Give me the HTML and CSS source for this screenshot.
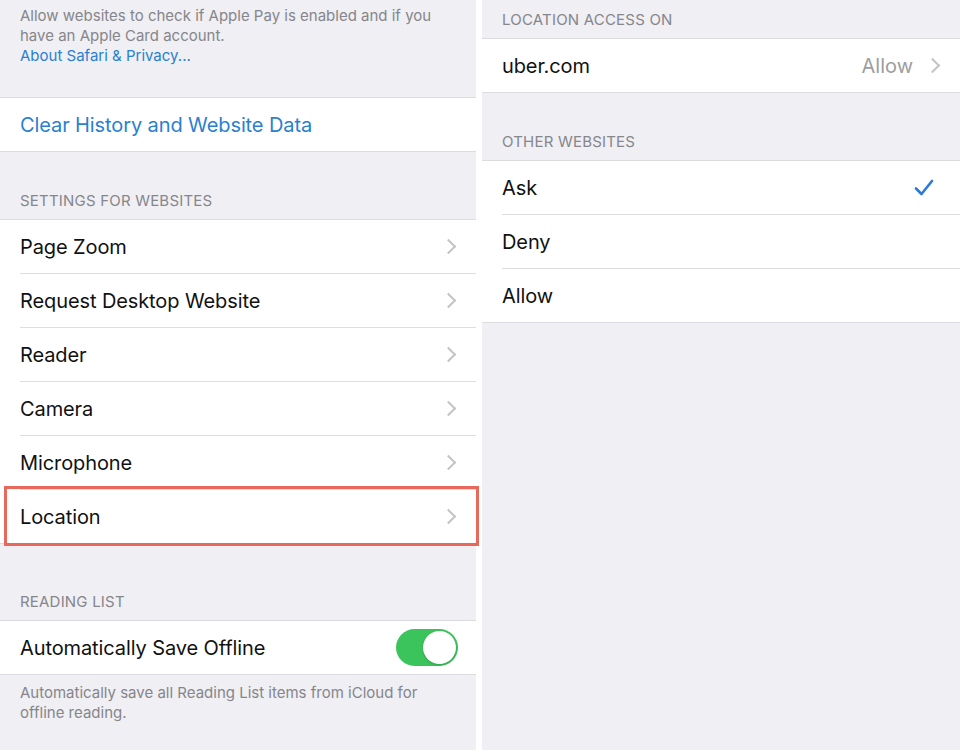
FILE: index.html
```html
<!DOCTYPE html>
<html lang="en">
<head>
    <meta charset="UTF-8">
    <title>Safari Settings</title>
    <link rel="stylesheet" href="styles.css">
</head>
<body>

<div class="screens">
    <div class="screen left">
        <div class="footnote top-note">
            Allow websites to check if Apple Pay is enabled and if you have an Apple Card account.
            <span class="link">About Safari &amp; Privacy...</span>
        </div>

        <div class="group clear-group">
            <div class="row"><span class="label blue">Clear History and Website Data</span></div>
        </div>

        <div class="header">Settings for Websites</div>
        <div class="group">
            <div class="row"><span class="label">Page Zoom</span><span class="chevron"></span></div>
            <div class="row"><span class="label">Request Desktop Website</span><span class="chevron"></span></div>
            <div class="row"><span class="label">Reader</span><span class="chevron"></span></div>
            <div class="row"><span class="label">Camera</span><span class="chevron"></span></div>
            <div class="row"><span class="label">Microphone</span><span class="chevron"></span></div>
            <div class="row highlighted"><span class="label">Location</span><span class="chevron"></span></div>
        </div>

        <div class="header reading">Reading List</div>
        <div class="group">
            <div class="row">
                <span class="label">Automatically Save Offline</span>
                <span class="toggle on"><span class="knob"></span></span>
            </div>
        </div>
        <div class="footnote">
            Automatically save all Reading List items from iCloud for offline reading.
        </div>
    </div>

    <div class="screen right">
        <div class="header first">Location Access On</div>
        <div class="group">
            <div class="row">
                <span class="label">uber.com</span>
                <span class="value">Allow</span><span class="chevron"></span>
            </div>
        </div>

        <div class="header other">Other Websites</div>
        <div class="group">
            <div class="row">
                <span class="label">Ask</span>
                <svg class="check" width="20" height="17" viewBox="0 0 20 17">
                    <path d="M2 9.5 L7.5 15 L18 2" fill="none" stroke="#2a7ad6" stroke-width="2.6" stroke-linecap="round" stroke-linejoin="round"/>
                </svg>
            </div>
            <div class="row"><span class="label">Deny</span></div>
            <div class="row"><span class="label">Allow</span></div>
        </div>
    </div>
</div>

</body>
</html>
```

FILE: styles.css
```css
body {
    margin: 0;
    background-color: #fff;
    font-family: 'Inter', 'Liberation Sans', sans-serif;
    overflow: hidden;
}
.screens {
    display: flex;
    gap: 6px;
    height: 750px;
}
.screen {
    background-color: #efeff4;
    height: 100%;
}
.left {
    width: 476px;
}
.right {
    flex-grow: 1;
}

/* grouped table */
.group {
    background-color: #fff;
    border-top: 1px solid #dcdce0;
    border-bottom: 1px solid #dcdce0;
}
.row {
    position: relative;
    display: flex;
    align-items: center;
    height: 53px;
    padding: 0 20px;
}
.row + .row {
    border-top: 1px solid #dedee2;
    margin-left: 20px;
    padding-left: 0;
}
.label {
    flex-grow: 1;
    font-size: 20px;
    color: #111;
    letter-spacing: -0.1px;
}
.blue {
    color: #2a7fd0;
}
.value {
    font-size: 20px;
    color: #9d9da2;
    margin-right: 14px;
}
.chevron {
    width: 9px;
    height: 9px;
    border-right: 2px solid #c4c4c8;
    border-top: 2px solid #c4c4c8;
    transform: rotate(45deg);
    margin-right: 2px;
}
.check {
    margin-right: 6px;
}

/* headers and footers */
.header {
    font-size: 15px;
    color: #86868b;
    text-transform: uppercase;
    letter-spacing: 0.2px;
    padding: 40px 20px 9px;
    line-height: 18px;
}
.header.first {
    padding-top: 11px;
}
.header.other {
    padding-top: 40px;
}
.header.reading {
    padding-top: 49px;
}
.footnote {
    font-size: 15px;
    line-height: 20px;
    color: #86868b;
    padding: 8px 20px 0;
}
.top-note {
    padding-top: 6px;
    height: 60px;
    margin-bottom: 31px;
}
.link {
    display: block;
    color: #2a7fd0;
}

/* red highlight box drawn over the location row */
.highlighted::after {
    content: '';
    position: absolute;
    left: -16px;
    right: -3px;
    top: -4px;
    bottom: -3px;
    border: 3px solid #e8695b;
}

/* switch */
.toggle {
    position: relative;
    width: 62px;
    height: 37px;
    border-radius: 19px;
    background-color: #3cc45c;
    margin-right: -2px;
}
.knob {
    position: absolute;
    right: 2px;
    top: 2px;
    width: 33px;
    height: 33px;
    border-radius: 50%;
    background-color: #fff;
    box-shadow: 0 1px 3px rgba(0, 0, 0, 0.2);
}
```
